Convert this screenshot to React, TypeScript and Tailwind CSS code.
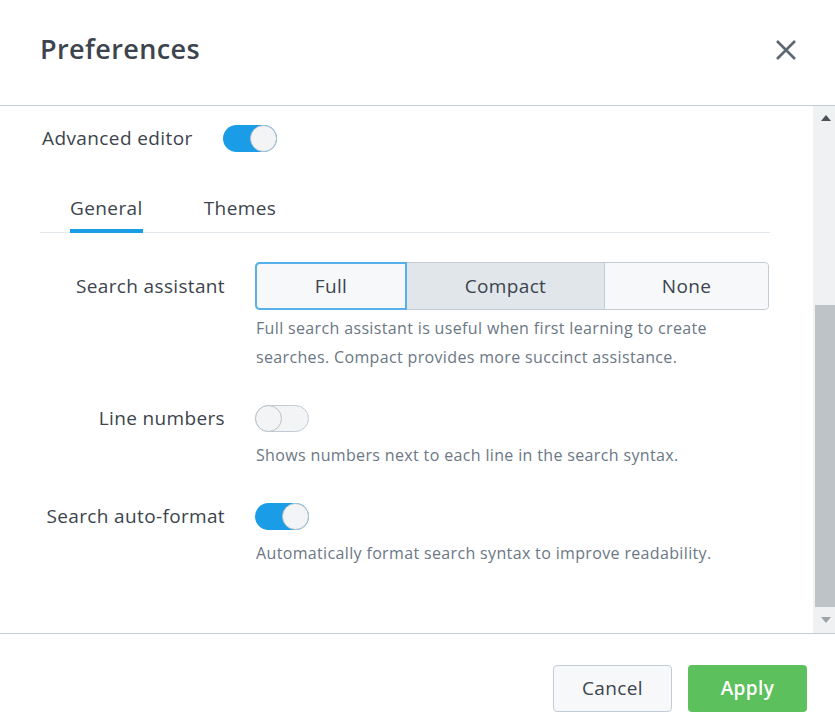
import { useState } from "react"

const font = { fontFamily: '"Open Sans", "Liberation Sans", sans-serif' }

function Toggle({ on, onClick }: { on: boolean; onClick?: () => void }) {
  return (
    <button
      onClick={onClick}
      className={`relative w-[54px] h-[27px] rounded-full flex items-center shrink-0 ${
        on ? "bg-[#1a9ce6] justify-end" : "bg-[#f2f4f5] border border-[#c3cbd4] justify-start"
      }`}
    >
      <span
        className={`block w-[27px] h-[27px] rounded-full bg-[#f2f4f5] border border-[#b8c0c8] ${on ? "" : "-ml-px"}`}
      />
    </button>
  )
}

const modes = ["Full", "Compact", "None"]

export default function App() {
  const [mode, setMode] = useState("Full")
  const [advanced, setAdvanced] = useState(true)
  const [lineNums, setLineNums] = useState(false)
  const [autoFormat, setAutoFormat] = useState(true)

  return (
    <div className="w-[835px] h-[726px] bg-white flex flex-col overflow-hidden text-[#3c444d]" style={font}>
      {/* header */}
      <div className="h-[106px] shrink-0 flex items-center justify-between pl-10 pr-[38px] pb-[6px] border-b border-[#c3cbd4]">
        <h1 className="text-[27px] font-semibold tracking-[0.4px]">Preferences</h1>
        <svg width="22" height="22" viewBox="0 0 22 22" className="text-[#5c6773]">
          <path d="M2 2 L20 20 M20 2 L2 20" stroke="currentColor" strokeWidth="2.6" />
        </svg>
      </div>

      {/* body */}
      <div className="flex-1 flex min-h-0">
        <div className="flex-1 pt-[18px]">
          <div className="flex items-center gap-[30px] pl-[42px] h-[28px]">
            <span className="text-[19px] tracking-[0.4px]">Advanced editor</span>
            <Toggle on={advanced} onClick={() => setAdvanced(!advanced)} />
          </div>

          {/* tabs */}
          <div className="mt-[44px] ml-10 mr-[43px] border-b border-[#e1e6eb] flex gap-[61px] px-[30px] text-[19px] tracking-[0.4px]">
            <div className="pb-[8px] border-b-4 border-[#1a9ce6] -mb-px leading-[25px]">General</div>
            <div className="pb-[8px] leading-[25px]">Themes</div>
          </div>

          {/* settings */}
          <div className="grid grid-cols-[185px_1fr] gap-x-[30px] ml-10 mr-[44px] mt-[29px] text-[19px] tracking-[0.35px]">
            <div className="h-[48px] flex items-center justify-end">Search assistant</div>
            <div>
              <div className="flex h-[48px] rounded-[4px] border border-[#c3cbd4]">
                {modes.map((m, i) => (
                  <button
                    key={m}
                    onClick={() => setMode(m)}
                    className={`${i === 0 ? "w-[150px] rounded-l-[4px]" : i === 1 ? "w-[198px] border-l border-[#c3cbd4]" : "flex-1 border-l border-[#c3cbd4] rounded-r-[4px]"} ${
                      m === "Compact" ? "bg-[#e1e6eb]" : "bg-[#f7f8fa]"
                    } ${m === mode ? "outline outline-2 outline-[#57b0ea] -outline-offset-1 z-10" : ""} text-[#3c444d]`}
                  >
                    {m}
                  </button>
                ))}
              </div>
              <p className="mt-[4px] text-[16px] tracking-[0.35px] leading-[29px] text-[#6b7785] pl-px">
                Full search assistant is useful when first learning to create
                <br />
                searches. Compact provides more succinct assistance.
              </p>
            </div>

            <div className="mt-[33px] h-[27px] flex items-center justify-end">Line numbers</div>
            <div className="mt-[33px]">
              <Toggle on={lineNums} onClick={() => setLineNums(!lineNums)} />
              <p className="mt-[9px] text-[16px] tracking-[0.35px] leading-[29px] text-[#6b7785] pl-px">
                Shows numbers next to each line in the search syntax.
              </p>
            </div>

            <div className="mt-[33px] h-[27px] flex items-center justify-end">Search auto-format</div>
            <div className="mt-[33px]">
              <Toggle on={autoFormat} onClick={() => setAutoFormat(!autoFormat)} />
              <p className="mt-[9px] text-[16px] tracking-[0.35px] leading-[29px] text-[#6b7785] pl-px">
                Automatically format search syntax to improve readability.
              </p>
            </div>
          </div>
        </div>

        {/* scrollbar */}
        <div className="w-[22px] shrink-0 bg-[#f0f1f2] flex flex-col items-end">
          <div className="h-[24px] w-full flex items-center justify-center pl-[4px]">
            <svg width="10" height="6" viewBox="0 0 10 6">
              <path d="M0 6 L5 0 L10 6 Z" fill="#4a5159" />
            </svg>
          </div>
          <div className="h-[175px]" />
          <div className="w-[20px] h-[302px] bg-[#bdc3c7]" />
          <div className="flex-1 w-full flex items-center justify-center pl-[4px]">
            <svg width="10" height="6" viewBox="0 0 10 6">
              <path d="M0 0 L10 0 L5 6 Z" fill="#9aa2aa" />
            </svg>
          </div>
        </div>
      </div>

      {/* footer */}
      <div className="h-[93px] shrink-0 border-t border-[#c3cbd4] flex justify-end items-start gap-4 pt-[31px] pr-[28px] text-[19px] tracking-[0.4px]">
        <button className="w-[119px] h-[47px] rounded-[4px] border border-[#c3cbd4] bg-[#f7f8fa] text-[#3c444d]">
          Cancel
        </button>
        <button className="w-[119px] h-[47px] rounded-[4px] bg-[#5cc05c] font-semibold text-white">
          Apply
        </button>
      </div>
    </div>
  )
}
